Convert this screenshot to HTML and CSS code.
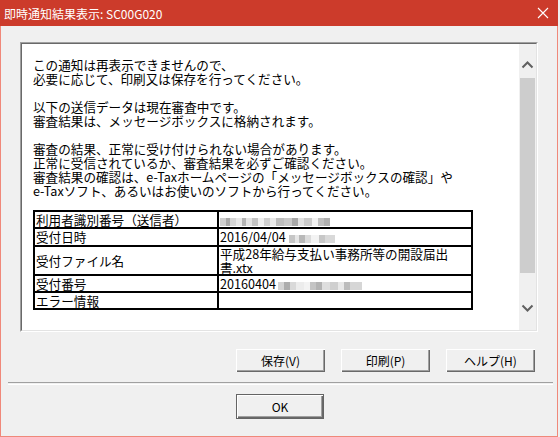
FILE: index.html
```html
<!DOCTYPE html>
<html lang="ja">
<head>
<meta charset="utf-8">
<link rel="stylesheet" href="styles.css">
</head>
<body>
<div class="window">
  <div class="titlebar">
    <span class="title">即時通知結果表示: SC00G020</span>
    <svg class="close" width="12" height="12" viewBox="0 0 12 12"><path d="M1 1 L11 11 M11 1 L1 11" stroke="#fff" stroke-width="1.1" fill="none"/></svg>
  </div>
  <div class="client">
    <div class="panel">
      <div class="panel-inner">
        <div class="doc">
          <p>この通知は再表示できませんので、<br>必要に応じて、印刷又は保存を行ってください。</p>
          <p>以下の送信データは現在審査中です。<br>審査結果は、メッセージボックスに格納されます。</p>
          <p class="last">審査の結果、正常に受け付けられない場合があります。<br>正常に受信されているか、審査結果を必ずご確認ください。<br>審査結果の確認は、e-Taxホームページの「メッセージボックスの確認」や<br>e-Taxソフト、あるいはお使いのソフトから行ってください。</p>
          <table class="info">
            <tr><td class="k">利用者識別番号（送信者）</td><td class="v"><span class="blur b1"></span></td></tr>
            <tr class="r2"><td class="k">受付日時</td><td class="v">2016/04/04 <span class="blur b2"></span></td></tr>
            <tr class="tall"><td class="k">受付ファイル名</td><td class="v">平成28年給与支払い事務所等の開設届出<br>書.xtx</td></tr>
            <tr><td class="k">受付番号</td><td class="v">20160404<span class="blur b3"></span></td></tr>
            <tr><td class="k">エラー情報</td><td class="v"></td></tr>
          </table>
        </div>
        <div class="scrollbar">
          <div class="sb-up"><svg width="17" height="10" viewBox="0 0 17 10"><path d="M3.5 7.5 L8.5 2.5 L13.5 7.5" stroke="#606060" stroke-width="2" fill="none"/></svg></div>
          <div class="track"><div class="thumb"></div></div>
          <div class="sb-down"><svg width="17" height="10" viewBox="0 0 17 10"><path d="M3.5 2.5 L8.5 7.5 L13.5 2.5" stroke="#606060" stroke-width="2" fill="none"/></svg></div>
        </div>
      </div>
    </div>
    <div class="buttons">
      <button class="btn">保存(V)</button>
      <button class="btn">印刷(P)</button>
      <button class="btn">ヘルプ(H)</button>
    </div>
    <div class="sep"></div>
    <div class="okrow">
      <button class="btn ok">OK</button>
    </div>
  </div>
</div>
</body>
</html>
```
FILE: styles.css
```css
html, body {
  margin: 0;
  padding: 0;
  background: #f0f0f0;
  width: 560px;
  height: 437px;
  overflow: hidden;
}
body {
  font-family: "Noto Sans CJK JP", "Noto Sans", sans-serif;
  font-size: 12px;
  color: #000;
}
.window {
  box-sizing: border-box;
  width: 558px;
  height: 437px;
  border: 1px solid #f0887a;
  border-top: none;
  background: #f0f0f0;
}
.titlebar {
  height: 26px;
  background: #cc3b2b;
  display: flex;
  align-items: center;
  justify-content: space-between;
  padding: 0 9px 0 4px;
  margin: 0 -1px;
}
.title {
  color: #fff;
  font-size: 12px;
  line-height: 14px;
  position: relative;
  top: 1px;
}
.close {
  display: block;
}
.client {
  padding: 16px 0 0 19px;
}
.panel {
  width: 518px;
  height: 290px;
  box-sizing: border-box;
  border: 1px solid;
  border-color: #a0a0a0 #ffffff #ffffff #a0a0a0;
}
.panel-inner {
  height: 100%;
  box-sizing: border-box;
  border: 1px solid;
  border-color: #696969 #e3e3e3 #e3e3e3 #696969;
  display: flex;
}
.doc {
  flex: 1;
  background: #fff;
  padding: 14px 0 0 11px;
  overflow: hidden;
  font-size: 12.6px;
}
.doc p {
  margin: 0 0 14px 0;
  line-height: 14px;
  white-space: nowrap;
}
.doc p.last {
  margin-bottom: 0;
}
.scrollbar {
  width: 17px;
  background: #f0f0f0;
  display: flex;
  flex-direction: column;
}
.sb-up {
  height: 34px;
  padding-top: 16px;
  box-sizing: border-box;
}
.sb-down {
  height: 34px;
  padding-top: 7px;
  box-sizing: border-box;
}
.sb-up svg, .sb-down svg {
  display: block;
}
.track {
  flex: 1;
  padding: 0 1px;
}
.thumb {
  background: #cdcdcd;
  height: 195px;
}
.info {
  border-collapse: collapse;
  margin-top: 12px;
  width: 440px;
}
.info td {
  border: 2px solid #000;
  padding: 0 1px;
  line-height: 15px;
  height: 15px;
  vertical-align: middle;
  white-space: nowrap;
}
.info tr.r2 td {
  line-height: 16px;
  height: 16px;
}
.info td.k {
  width: 180px;
}
.info tr.tall td.v {
  line-height: 13.5px;
}
.blur {
  display: inline-block;
  height: 8px;
  vertical-align: middle;
}
.b1 {
  width: 110px;
  background: linear-gradient(90deg, #cfcfcf 0 6px, #a9a9a9 6px 10px, #d6d6d6 10px 16px, #e9e9e9 16px 22px, #b4b4b4 22px 26px, #e4e4e4 26px 32px, #c4c4c4 32px 38px, #f0f0f0 38px 44px, #d0d0d0 44px 50px, #eaeaea 50px 56px, #bdbdbd 56px 64px, #c9c9c9 64px 72px, #a7a7a7 72px 78px, #e2e2e2 78px 84px, #cbcbcb 84px 92px, #f2f2f2 92px 98px, #c0c0c0 98px 104px, #b0b0b0 104px 110px);
}
.b2 {
  width: 46px;
  background: linear-gradient(90deg, #c6c6c6 0 6px, #e6e6e6 6px 10px, #b9b9b9 10px 16px, #dcdcdc 16px 22px, #f3f3f3 22px 30px, #c7c7c7 30px 36px, #d9d9d9 36px 46px);
}
.b3 {
  width: 84px;
  margin-left: 2px;
  background: linear-gradient(90deg, #d3d3d3 0 6px, #acacac 6px 12px, #d9d9d9 12px 18px, #ececec 18px 26px, #f3f3f3 26px 32px, #c4c4c4 32px 38px, #b3b3b3 38px 44px, #dedede 44px 52px, #cfcfcf 52px 60px, #e8e8e8 60px 66px, #bcbcbc 66px 72px, #d6d6d6 72px 84px);
}
.buttons {
  display: flex;
  gap: 16px;
  margin: 17px 0 0 216px;
}
.btn {
  box-sizing: border-box;
  width: 89px;
  height: 23px;
  margin: 0;
  padding: 0;
  font-family: "Noto Sans CJK JP", "Noto Sans", sans-serif;
  font-size: 12px;
  color: #000;
  background: #f0f0f0;
  border: none;
  box-shadow: inset 1px 1px #ffffff, inset -1px -1px #696969, inset -2px -2px #a0a0a0;
}
.sep {
  margin: 10px 0 0 -12px;
  width: 545px;
  height: 1px;
  border-top: 1px solid #a0a0a0;
  border-bottom: 1px solid #ffffff;
}
.okrow {
  margin: 9px 0 0 216px;
}
.btn.ok {
  width: 88px;
  height: 25px;
  border: 1px solid #646464;
  box-shadow: inset 1px 1px #ffffff, inset -1px -1px #696969, inset -2px -2px #a0a0a0;
}
```
